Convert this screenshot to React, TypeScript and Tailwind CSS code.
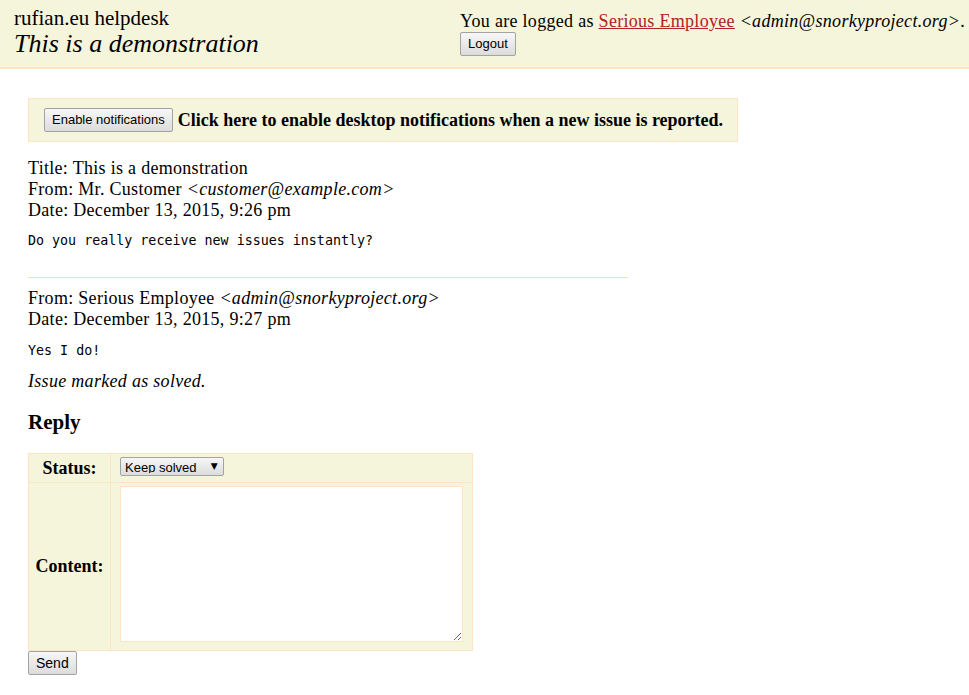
import { useState } from 'react';

const serif = "font-['Liberation_Serif',serif]";
const btn =
  "font-['Liberation_Sans',Arial,sans-serif] text-[13px] leading-[16px] tracking-normal text-black border border-[#a3a3a3] rounded-[2px] bg-gradient-to-b from-[#f7f7f7] to-[#dcdcdc] px-[7px] py-[2px]";

const App = () => {
  const [status, setStatus] = useState('solved');

  return (
    <div className={`min-h-screen w-full bg-white text-black ${serif} text-[18px] leading-[21px] tracking-[0.3px]`}>
      {/* Header */}
      <header className="h-[69px] bg-[#f5f5dc] border-b-2 border-[#ffe4c4] flex">
        <div className="w-[460px] pl-[14px] pt-[6px] tracking-normal">
          <div className="text-[21px] leading-[24px]">rufian.eu helpdesk</div>
          <div className="text-[26px] leading-[28px] italic">This is a demonstration</div>
        </div>
        <div className="pt-[11px]">
          <div>
            You are logged as{' '}
            <a href="#" className="text-[#b22222] underline">Serious Employee</a>{' '}
            <i>&lt;admin@snorkyproject.org&gt;</i>.
          </div>
          <button className={`${btn} py-[3px]`}>Logout</button>
        </div>
      </header>

      <main className="pl-[28px] pt-[29px]">
        {/* Notifications */}
        <div className="w-[710px] h-[44px] bg-[#f5f5dc] border border-[#ffe4c4] flex items-center pl-[15px] gap-[5px]">
          <button className={`${btn} py-[3px]`}>Enable notifications</button>
          <span className="font-bold tracking-normal">
            Click here to enable desktop notifications when a new issue is reported.
          </span>
        </div>

        {/* First message */}
        <div className="mt-[16px]">
          <div>Title: This is a demonstration</div>
          <div>
            From: Mr. Customer <i>&lt;customer@example.com&gt;</i>
          </div>
          <div>Date: December 13, 2015, 9:26 pm</div>
          <pre className="font-['DejaVu_Sans_Mono',monospace] text-[13.33px] leading-[16px] tracking-normal mt-[12px]">
            Do you really receive new issues instantly?
          </pre>
        </div>

        <hr className="w-[600px] h-px border-0 bg-[#ffdead] mt-[28px]" />

        {/* Second message */}
        <div className="mt-[10px]">
          <div>
            From: Serious Employee <i>&lt;admin@snorkyproject.org&gt;</i>
          </div>
          <div>Date: December 13, 2015, 9:27 pm</div>
          <pre className="font-['DejaVu_Sans_Mono',monospace] text-[13.33px] leading-[16px] tracking-normal mt-[13px]">Yes I do!</pre>
          <div className="italic mt-[12px]">Issue marked as solved.</div>
        </div>

        {/* Reply */}
        <h2 className="font-bold text-[21px] leading-[26px] tracking-normal mt-[17px]">Reply</h2>

        <table className="mt-[18px] border-collapse bg-[#f5f5dc] w-[445px]">
          <tbody>
            <tr>
              <th className="w-[82px] h-[29px] border border-[#ffe4c4] text-center font-bold tracking-normal">Status:</th>
              <td className="border border-[#ffe4c4] pl-[9px] py-0">
                <div className="flex items-center h-[27px] pb-[4px]">
                  <div className="relative">
                    <select
                      value={status}
                      onChange={(e) => setStatus(e.target.value)}
                      className={`${btn} block appearance-none w-[104px] h-[19px] py-0 pl-[4px] pr-[20px]`}
                    >
                      <option value="solved">Keep solved</option>
                      <option value="open">Reopen</option>
                    </select>
                    <span className="pointer-events-none absolute right-[6px] top-[2px] text-[9px] leading-[14px] font-['DejaVu_Sans',sans-serif]">
                      ▼
                    </span>
                  </div>
                </div>
              </td>
            </tr>
            <tr>
              <th className="border border-[#ffe4c4] text-center font-bold tracking-normal">Content:</th>
              <td className="border border-[#ffe4c4] pl-[9px] pr-[9px] pt-[3px] pb-[8px]">
                <textarea className="block w-[343px] h-[156px] bg-white border border-[#ffe4c4]" />
              </td>
            </tr>
          </tbody>
        </table>

        <button className={`${btn} block text-[14px] py-[3px]`}>Send</button>
      </main>
    </div>
  );
};

export default App;
